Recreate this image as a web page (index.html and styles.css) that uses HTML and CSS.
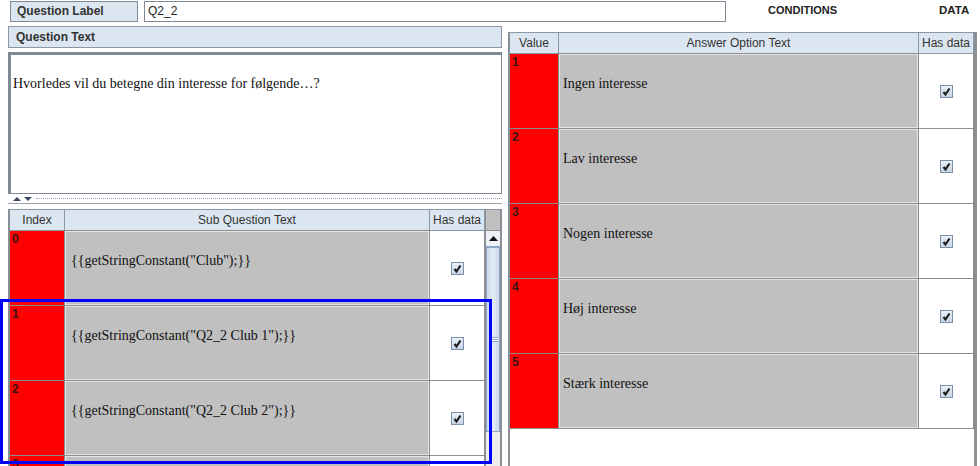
FILE: index.html
```html
<!DOCTYPE html>
<html lang="da">
<head>
    <meta charset="UTF-8">
    <title>Question Editor</title>
    <link rel="stylesheet" href="styles.css">
</head>
<body>
    <div class="app">
        <div class="toolbar">
            <div class="label-box">Question Label</div>
            <div class="label-input">Q2_2</div>
            <div class="tab tab-conditions">CONDITIONS</div>
            <div class="tab tab-data">DATA</div>
        </div>

        <div class="main">
            <div class="left">
                <div class="section-head">Question Text</div>
                <div class="text-area">Hvorledes vil du betegne din interesse for følgende…?</div>
                <div class="splitter">
                    <svg class="split-arrows" width="22" height="6" viewBox="0 0 22 6">
                        <path d="M1 5 L5 1 L9 5 Z" fill="#3b4a63"/>
                        <path d="M12 1 L20 1 L16 5 Z" fill="#3b4a63"/>
                    </svg>
                    <div class="split-dots"></div>
                </div>

                <div class="sub-pane">
                    <div class="sub-table">
                        <div class="grid-head sub-cols">
                            <div class="hcell">Index</div>
                            <div class="hcell">Sub Question Text</div>
                            <div class="hcell">Has data</div>
                        </div>
                        <div class="grid-row sub-cols">
                            <div class="num-cell">0</div>
                            <div class="text-cell">{{getStringConstant("Club");}}</div>
                            <div class="check-cell"><span class="check"><svg width="11" height="11" viewBox="0 0 11 11"><path d="M2.5 6 L4.5 8.5 L8.5 2.5" fill="none" stroke="#1e1e1e" stroke-width="2.2"/></svg></span></div>
                        </div>
                        <div class="grid-row sub-cols">
                            <div class="num-cell">1</div>
                            <div class="text-cell">{{getStringConstant("Q2_2 Club 1");}}</div>
                            <div class="check-cell"><span class="check"><svg width="11" height="11" viewBox="0 0 11 11"><path d="M2.5 6 L4.5 8.5 L8.5 2.5" fill="none" stroke="#1e1e1e" stroke-width="2.2"/></svg></span></div>
                        </div>
                        <div class="grid-row sub-cols">
                            <div class="num-cell">2</div>
                            <div class="text-cell">{{getStringConstant("Q2_2 Club 2");}}</div>
                            <div class="check-cell"><span class="check"><svg width="11" height="11" viewBox="0 0 11 11"><path d="M2.5 6 L4.5 8.5 L8.5 2.5" fill="none" stroke="#1e1e1e" stroke-width="2.2"/></svg></span></div>
                        </div>
                        <div class="grid-row sub-cols">
                            <div class="num-cell">3</div>
                            <div class="text-cell"></div>
                            <div class="check-cell"></div>
                        </div>
                    </div>
                    <div class="scrollbar">
                        <div class="scroll-corner"></div>
                        <div class="scroll-up"><svg width="9" height="5" viewBox="0 0 9 5"><path d="M0 5 L4.5 0 L9 5 Z" fill="#111"/></svg></div>
                        <div class="scroll-thumb"><span class="grip"></span></div>
                        <div class="scroll-track"></div>
                    </div>
                </div>
            </div>

            <div class="right">
                <div class="answer-table">
                    <div class="grid-head ans-cols">
                        <div class="hcell">Value</div>
                        <div class="hcell">Answer Option Text</div>
                        <div class="hcell">Has data</div>
                    </div>
                    <div class="grid-row ans-cols">
                        <div class="num-cell">1</div>
                        <div class="text-cell">Ingen interesse</div>
                        <div class="check-cell"><span class="check"><svg width="11" height="11" viewBox="0 0 11 11"><path d="M2.5 6 L4.5 8.5 L8.5 2.5" fill="none" stroke="#1e1e1e" stroke-width="2.2"/></svg></span></div>
                    </div>
                    <div class="grid-row ans-cols">
                        <div class="num-cell">2</div>
                        <div class="text-cell">Lav interesse</div>
                        <div class="check-cell"><span class="check"><svg width="11" height="11" viewBox="0 0 11 11"><path d="M2.5 6 L4.5 8.5 L8.5 2.5" fill="none" stroke="#1e1e1e" stroke-width="2.2"/></svg></span></div>
                    </div>
                    <div class="grid-row ans-cols">
                        <div class="num-cell">3</div>
                        <div class="text-cell">Nogen interesse</div>
                        <div class="check-cell"><span class="check"><svg width="11" height="11" viewBox="0 0 11 11"><path d="M2.5 6 L4.5 8.5 L8.5 2.5" fill="none" stroke="#1e1e1e" stroke-width="2.2"/></svg></span></div>
                    </div>
                    <div class="grid-row ans-cols">
                        <div class="num-cell">4</div>
                        <div class="text-cell">Høj interesse</div>
                        <div class="check-cell"><span class="check"><svg width="11" height="11" viewBox="0 0 11 11"><path d="M2.5 6 L4.5 8.5 L8.5 2.5" fill="none" stroke="#1e1e1e" stroke-width="2.2"/></svg></span></div>
                    </div>
                    <div class="grid-row ans-cols">
                        <div class="num-cell">5</div>
                        <div class="text-cell">Stærk interesse</div>
                        <div class="check-cell"><span class="check"><svg width="11" height="11" viewBox="0 0 11 11"><path d="M2.5 6 L4.5 8.5 L8.5 2.5" fill="none" stroke="#1e1e1e" stroke-width="2.2"/></svg></span></div>
                    </div>
                </div>
            </div>
        </div>

        <div class="selection"></div>
    </div>
</body>
</html>
```

FILE: styles.css
```css
body {
    margin: 0;
    background: #fff;
    font-family: "Liberation Sans", Arial, sans-serif;
    color: #333;
}
.app {
    position: relative;
    width: 980px;
    height: 466px;
    overflow: hidden;
}

/* top bar */
.toolbar {
    display: flex;
    align-items: flex-start;
    height: 26px;
    padding-top: 1px;
    box-sizing: border-box;
}
.label-box {
    margin-left: 10px;
    width: 128px;
    height: 21px;
    box-sizing: border-box;
    background: #dce6f0;
    border: 1px solid #7f8a95;
    font-size: 12px;
    font-weight: bold;
    line-height: 19px;
    padding-left: 6px;
}
.label-input {
    margin-left: 6px;
    width: 582px;
    height: 21px;
    box-sizing: border-box;
    border: 1px solid #7f8a95;
    font-size: 12px;
    line-height: 19px;
    padding-left: 3px;
    color: #222;
}
.tab {
    font-size: 11px;
    font-weight: bold;
    color: #222;
    padding-top: 3px;
}
.tab-conditions { margin-left: 42px; }
.tab-data { margin-left: 102px; font-size: 11.5px; }

.main {
    display: flex;
    align-items: flex-start;
}

/* left side */
.left {
    margin-left: 8px;
    width: 494px;
}
.section-head {
    height: 22px;
    box-sizing: border-box;
    background: #dce6f0;
    border: 1px solid #8a97a4;
    font-size: 12px;
    font-weight: bold;
    line-height: 20px;
    padding-left: 7px;
}
.text-area {
    margin-top: 4px;
    height: 142px;
    box-sizing: border-box;
    border: 1px solid #7f8a95;
    border-top: 3px solid #7f8a95;
    border-left: 3px solid #7f8a95;
    padding: 21px 0 0 2px;
    font-family: "Liberation Serif", "Times New Roman", serif;
    font-size: 14px;
    color: #111;
}
.splitter {
    height: 9px;
    display: flex;
    align-items: center;
    gap: 2px;
    padding-left: 4px;
    border-bottom: 1px solid #9aa3ad;
}
.split-dots {
    flex: 1;
    border-top: 1px dotted #9aa6b3;
}
.sub-pane {
    margin-top: 5px;
    height: 262px;
    display: flex;
    border-left: 2px solid #8a8f96;
    border-right: 2px solid #8a8f96;
    border-top: 1px solid #8a97a4;
}
.sub-table {
    width: 475px;
}
.scrollbar {
    width: 15px;
    display: flex;
    flex-direction: column;
    border-left: 1px solid #8a8f96;
}
.scroll-corner {
    height: 20px;
    background: #c0c0c0;
    border-bottom: 1px solid #8a8f96;
}
.scroll-up {
    height: 15px;
    display: flex;
    align-items: center;
    justify-content: center;
    background: #eef2f7;
    border-bottom: 1px solid #8da4c4;
}
.scroll-thumb {
    height: 185px;
    box-sizing: border-box;
    background: linear-gradient(to right, #c9d9ec, #e4edf7 50%, #c9d9ec);
    border: 1px solid #8da4c4;
    display: flex;
    align-items: center;
    justify-content: center;
}
.grip {
    width: 9px;
    height: 5px;
    border-top: 1px solid #8da4c4;
    border-bottom: 1px solid #8da4c4;
    background: linear-gradient(#fff 0, #fff 1px, #8da4c4 1px, #8da4c4 2px, #fff 2px);
    box-sizing: border-box;
}
.scroll-track {
    flex: 1;
    background: #eeeeee;
}

/* tables */
.grid-head,
.grid-row {
    display: grid;
}
.sub-cols { grid-template-columns: 55px 365px 55px; }
.ans-cols { grid-template-columns: 49px 360px 55px; }
.grid-head {
    height: 21px;
    box-sizing: border-box;
    border-bottom: 1px solid #8a97a4;
}
.hcell {
    background: #dce6f0;
    border-right: 1px solid #8a97a4;
    font-size: 12px;
    line-height: 20px;
    text-align: center;
    color: #333;
    white-space: nowrap;
    overflow: hidden;
}
.grid-row {
    height: 75px;
    box-sizing: border-box;
    border-bottom: 1px solid #8c8c8c;
}
.num-cell {
    background: #ff0000;
    border-right: 1px solid #8c8c8c;
    font-size: 12px;
    font-weight: bold;
    color: #3a1414;
    line-height: 14px;
    padding: 1px 0 0 2px;
}
.text-cell {
    background: #c0c0c0;
    border: 1px solid #e4e4e4;
    outline: 1px solid #8c8c8c;
    margin-right: 1px;
    font-family: "Liberation Serif", "Times New Roman", serif;
    font-size: 14px;
    color: #111;
    padding: 21px 0 0 5px;
    white-space: nowrap;
    overflow: hidden;
}
.ans-cols .text-cell {
    padding-left: 3px;
}
.check-cell {
    background: #fff;
    border-right: 1px solid #8c8c8c;
    display: flex;
    align-items: center;
    justify-content: center;
}
.check {
    width: 13px;
    height: 13px;
    box-sizing: border-box;
    border: 1px solid #7d8fa6;
    background: linear-gradient(#e9f0f7, #c6d4e4);
    display: flex;
    align-items: center;
    justify-content: center;
}

/* right side */
.right {
    margin-left: 6px;
    margin-top: 6px;
    width: 469px;
    height: 434px;
    box-sizing: border-box;
    border-left: 2px solid #8a8f96;
    border-right: 3px solid #8a8f96;
    border-top: 1px solid #8a97a4;
}

/* selection frame over the sub question rows */
.selection {
    position: absolute;
    left: 0;
    top: 299px;
    width: 492px;
    height: 165px;
    box-sizing: border-box;
    border: 3px solid #0000ff;
}
```
